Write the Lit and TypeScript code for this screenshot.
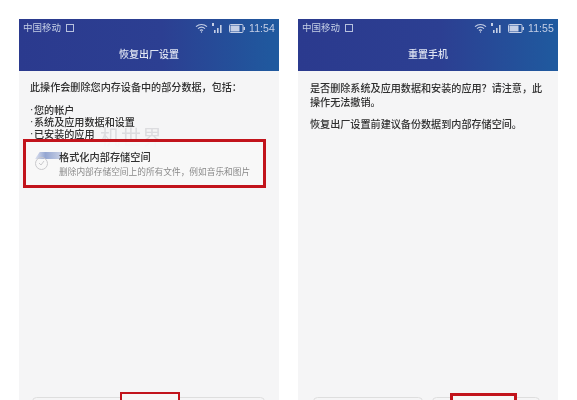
import { LitElement, html, css } from "lit";
import { customElement, property } from "lit/decorators.js";

@customElement("phone-screen")
class PhoneScreen extends LitElement {
  @property() time = "";
  @property() heading = "";
  @property({ type: Number }) redLeft = 0;
  @property({ type: Number }) redWidth = 0;
  @property({ type: Number }) redHeight = 12;
  @property({ type: Number }) redThickness = 2;
  @property({ type: Array }) buttons: number[][] = [];

  static styles = css`
    :host {
      display: flex;
      flex-direction: column;
      width: 260px;
      height: 381px;
      background: #f5f5f6;
      position: relative;
      overflow: hidden;
      font-family: "Noto Sans CJK SC", "Liberation Sans", sans-serif;
    }
    .head {
      height: 52px;
      flex: none;
      background: linear-gradient(90deg, #2b3a8e 0%, #2c3f92 55%, #1f5a9f 100%);
      color: #dfe4f2;
      display: flex;
      flex-direction: column;
      filter: blur(0.4px);
    }
    .status {
      height: 18px;
      display: flex;
      align-items: center;
      padding: 0 4px;
      font-size: 9.5px;
      gap: 2px;
      color: #c5cfe6;
    }
    .carrier { line-height: 16px; margin-top: -2px; }
    .sim {
      width: 8px;
      height: 8px;
      border: 1px solid #b7c1de;
      box-sizing: border-box;
      margin-left: 3px;
      margin-top: -1px;
    }
    .spacer { flex: 1; }
    .status svg { display: block; flex: none; }
    .clock {
      font-family: "Liberation Sans", sans-serif;
      font-size: 10.5px;
      margin-left: 2px;
      letter-spacing: 0.1px;
    }
    .title {
      flex: 1;
      display: flex;
      align-items: center;
      justify-content: center;
      font-size: 10px;
      font-weight: 500;
      padding-bottom: 2px;
    }
    .body { flex: 1; filter: blur(0.35px); }
    .foot {
      position: absolute;
      bottom: -6px;
      height: 9px;
      border: 1px solid #dedede;
      border-radius: 5px;
      box-sizing: border-box;
    }
    .red {
      position: absolute;
      bottom: -4px;
      border-style: solid;
      border-color: #c2141c;
      background: #f7f7f7;
      box-sizing: border-box;
    }
  `;

  render() {
    return html`
      <div class="head">
        <div class="status">
          <span class="carrier">中国移动</span><span class="sim"></span>
          <span class="spacer"></span>
          <svg width="13" height="10" viewBox="0 0 13 10" fill="none" stroke="#c5cfe6" stroke-width="1.2">
            <path d="M1 3.6C4.3 .8 8.7 .8 12 3.6M3 5.6c2.2-1.8 4.8-1.8 7 0M5 7.5c1-.8 2-.8 3 0" />
            <circle cx="6.5" cy="9" r=".7" fill="#c5cfe6" stroke="none" />
          </svg>
          <svg width="12" height="11" viewBox="0 0 12 11" fill="#c5cfe6" style="margin-left:1px">
            <rect x="1" y="0" width="2" height="3" />
            <rect x="3" y="7" width="1.6" height="3" />
            <rect x="6" y="5" width="1.6" height="5" />
            <rect x="9" y="2" width="1.6" height="8" />
          </svg>
          <svg width="16" height="9" viewBox="0 0 16 9" style="margin-left:4px">
            <rect x=".5" y=".5" width="13.5" height="8" rx="1" fill="none" stroke="#c5cfe6" />
            <rect x="1.5" y="1.5" width="9" height="6" fill="#c5cfe6" />
            <rect x="14.5" y="3" width="1.5" height="3" fill="#c5cfe6" />
          </svg>
          <span class="clock">${this.time}</span>
        </div>
        <div class="title">${this.heading}</div>
      </div>
      <div class="body"><slot></slot></div>
      ${this.buttons.map(
        ([l, w]) => html`<div class="foot" style="left:${l}px;width:${w}px"></div>`
      )}
      <div
        class="red"
        style="left:${this.redLeft}px;width:${this.redWidth}px;height:${this.redHeight}px;border-width:${this.redThickness}px"
      ></div>
    `;
  }
}

@customElement("app-root")
class AppRoot extends LitElement {
  static styles = css`
    :host {
      display: block;
      width: 577px;
      height: 400px;
      overflow: hidden;
      background: #fff;
      font-family: "Noto Sans CJK SC", "Liberation Sans", sans-serif;
    }
    .page {
      display: flex;
      gap: 19px;
      padding: 19px 0 0 19px;
    }
    .para {
      margin: 0;
      color: #2f2f2f;
      font-size: 10.1px;
      line-height: 14px;
      font-weight: 500;
    }
    .left { padding: 9px 0 0 11px; position: relative; }
    .list { margin-top: 10px; display: flex; flex-direction: column; }
    .row { height: 12px; line-height: 12px; display: flex; }
    .dot { font-family: "Liberation Sans", sans-serif; width: 4px; flex: none; }
    .right { padding: 10px 13px 0 12px; }
    .gap { margin-top: 8px; }
    .option {
      position: absolute;
      left: 4px;
      top: 68px;
      width: 243px;
      height: 49px;
      box-sizing: border-box;
      border: 3px solid #c2141c;
      background: rgba(247, 247, 247, 0.92);
      display: flex;
      align-items: center;
      gap: 11px;
      padding: 0 0 0 9px;
    }
    .smudge {
      position: absolute;
      left: 9px;
      top: 10px;
      width: 26px;
      height: 7px;
      background: linear-gradient(90deg, #dfe3f0, #94a6d2 40%, #c7cfe4);
      clip-path: polygon(18% 0, 100% 0, 100% 100%, 0 100%);
    }
    .radio {
      width: 13px;
      height: 13px;
      border: 1px solid #c9c9cc;
      border-radius: 50%;
      box-sizing: border-box;
      flex: none;
      margin-top: -1px;
      position: relative;
      display: flex;
      align-items: center;
      justify-content: center;
    }
    .radio svg { display: block; }
    .opt-text { display: flex; flex-direction: column; gap: 2px; margin-top: -1px; position: relative; }
    .opt-title { font-size: 10.2px; line-height: 15px; color: #2f2f2f; font-weight: 500; }
    .opt-sub { font-size: 8.7px; line-height: 12px; color: #8a8a8a; white-space: nowrap; }
    .watermark {
      position: absolute;
      left: 81px;
      top: 55px;
      font-size: 20px;
      line-height: 22px;
      color: #dcdcdf;
      letter-spacing: 1px;
    }
  `;

  render() {
    return html`
      <div class="page">
        <phone-screen
          time="11:54"
          heading="恢复出厂设置"
          .redLeft=${101}
          .redWidth=${60}
          .redHeight=${12}
          .redThickness=${2}
          .buttons=${[[13, 233]]}
        >
          <div class="left">
            <p class="para">此操作会删除您内存设备中的部分数据，包括：</p>
            <div class="para list">
              <div class="row"><span class="dot">·</span><span>您的帐户</span></div>
              <div class="row"><span class="dot">·</span><span>系统及应用数据和设置</span></div>
              <div class="row"><span class="dot">·</span><span>已安装的应用</span></div>
            </div>
            <span class="watermark">机世界</span>
            <div class="option">
              <span class="smudge"></span>
              <span class="radio">
                <svg width="7" height="6" viewBox="0 0 7 6" fill="none" stroke="#c9c9cc" stroke-width="1">
                  <path d="M1 3l2 2 3-4" />
                </svg>
              </span>
              <div class="opt-text">
                <span class="opt-title">格式化内部存储空间</span>
                <span class="opt-sub">删除内部存储空间上的所有文件，例如音乐和图片</span>
              </div>
            </div>
          </div>
        </phone-screen>
        <phone-screen
          time="11:55"
          heading="重置手机"
          .redLeft=${152}
          .redWidth=${67}
          .redHeight=${11}
          .redThickness=${3}
          .buttons=${[[15, 110], [134, 108]]}
        >
          <div class="right">
            <p class="para">是否删除系统及应用数据和安装的应用？请注意，此操作无法撤销。</p>
            <p class="para gap">恢复出厂设置前建议备份数据到内部存储空间。</p>
          </div>
        </phone-screen>
      </div>
    `;
  }
}
